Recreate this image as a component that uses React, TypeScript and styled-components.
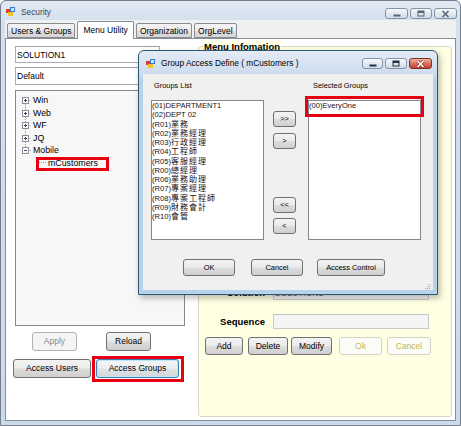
import React from 'react';
import styled, { createGlobalStyle, css } from 'styled-components';

const GlobalStyle = createGlobalStyle`
  html, body {
    margin: 0;
    padding: 0;
    background: #ffffff;
  }
  body {
    font-family: "Liberation Sans", Arial, "Noto Sans CJK TC", sans-serif;
    color: #000;
  }
  * {
    box-sizing: border-box;
  }
`;

const UI_FONT = '"Liberation Sans", Arial, "Noto Sans CJK TC", sans-serif';

// ---------- window chrome ----------

const Window = styled.div`
  position: relative;
  width: 461px;
  height: 426px;
  display: flex;
  flex-direction: column;
  border: 1px solid #737f8c;
  border-radius: 6px 6px 0 0;
  background: linear-gradient(#e2eaf4, #d4e0ee 20px, #cbdaec);
  overflow: hidden;
`;

const TitleBar = styled.div<{ $h: number; $padL: number; $padR: number }>`
  height: ${(p) => p.$h}px;
  flex: none;
  display: flex;
  align-items: center;
  padding: 0 ${(p) => p.$padR}px 0 ${(p) => p.$padL}px;
`;

const Caption = styled.span<{ $active?: boolean; $ml: number; $mt?: number }>`
  margin: ${(p) => p.$mt ?? 0}px 0 0 ${(p) => p.$ml}px;
  font-family: ${UI_FONT};
  font-size: 8.3px;
  color: ${(p) => (p.$active ? '#000' : '#3c4650')};
  flex: 1;
  white-space: nowrap;
`;

const CaptionButtons = styled.div<{ $mt: number }>`
  align-self: flex-start;
  margin-top: ${(p) => p.$mt}px;
  display: flex;
  gap: 2px;
`;

const CaptionButton = styled.span<{ $w: number; $close?: boolean }>`
  width: ${(p) => p.$w}px;
  height: 11px;
  display: flex;
  align-items: center;
  justify-content: center;
  border: 1px solid ${(p) => (p.$close ? '#7a2f24' : '#8393a6')};
  border-radius: 3px;
  background: ${(p) =>
    p.$close
      ? 'linear-gradient(#efb6a8, #d9705d 50%, #c5432f)'
      : 'linear-gradient(#f7f9fc, #e3e9f0 50%, #d1dbe6)'};
`;

const AppIcon = () => (
  <svg width="9" height="10" viewBox="0 0 9 10">
    <rect x="0" y="3" width="4" height="4" fill="#e23b2b" />
    <rect x="4" y="1" width="5" height="5" fill="#3b78d4" />
    <rect x="5" y="2" width="3" height="3" fill="#cfe2fb" />
    <rect x="2" y="6" width="5" height="4" fill="#f2c12e" />
  </svg>
);

const MinGlyph = ({ c }: { c: string }) => (
  <svg width="8" height="6" viewBox="0 0 8 6">
    <rect x="0.5" y="3.5" width="7" height="2" fill={c} />
  </svg>
);

const RestoreGlyph = ({ c }: { c: string }) => (
  <svg width="8" height="7" viewBox="0 0 8 7">
    <rect x="1" y="1" width="6" height="5" fill="none" stroke={c} strokeWidth="1" />
    <rect x="1" y="1" width="6" height="2" fill={c} />
  </svg>
);

const CloseGlyph = ({ c, edge }: { c: string; edge?: string }) => (
  <svg width="9" height="8" viewBox="0 0 9 8">
    {edge && <path d="M1.5 1 L7.5 7 M7.5 1 L1.5 7" stroke={edge} strokeWidth="3" />}
    <path d="M1.5 1 L7.5 7 M7.5 1 L1.5 7" stroke={c} strokeWidth="1.6" />
  </svg>
);

// ---------- tabs ----------

const Client = styled.div`
  flex: 1;
  display: flex;
  flex-direction: column;
  padding: 0 4px 4px 4px;
`;

const TabStrip = styled.div`
  height: 18px;
  flex: none;
  display: flex;
  align-items: flex-end;
  gap: 2px;
  padding-left: 2px;
  background: #f0f0f0;
  position: relative;
  z-index: 1;
`;

const Tab = styled.div<{ $active?: boolean }>`
  height: ${(p) => (p.$active ? 18 : 15)}px;
  margin-bottom: ${(p) => (p.$active ? -1 : 0)}px;
  padding: 0 ${(p) => (p.$active ? 5 : 3)}px ${(p) => (p.$active ? 2 : 0)}px;
  display: flex;
  align-items: center;
  border: 1px solid #898c95;
  border-bottom: ${(p) => (p.$active ? 'none' : '1px solid #898c95')};
  border-radius: 2px 2px 0 0;
  background: ${(p) =>
    p.$active ? '#ffffff' : 'linear-gradient(#f3f3f3, #ececec 50%, #e0e0e0 51%, #d5d5d5)'};
  font-size: 8.5px;
  white-space: nowrap;
`;

const TabPage = styled.div`
  flex: 1;
  display: grid;
  grid-template-columns: 192px 255px;
  border: 1px solid #898c95;
  background: #ffffff;
`;

// ---------- left pane ----------

const LeftPane = styled.div`
  display: flex;
  flex-direction: column;
  padding: 7px 0 0 7px;
`;

const TextBox = styled.div<{ $w: number; $h: number; $mt?: number; $ml?: number; $disabled?: boolean }>`
  width: ${(p) => p.$w}px;
  height: ${(p) => p.$h}px;
  margin: ${(p) => p.$mt ?? 0}px 0 0 ${(p) => p.$ml ?? 0}px;
  padding-left: 1px;
  display: flex;
  align-items: center;
  border: 1px solid ${(p) => (p.$disabled ? '#c9c9c9' : '#abadb3')};
  border-top-color: ${(p) => (p.$disabled ? '#c2c2c2' : '#9ea1a8')};
  background: ${(p) => (p.$disabled ? '#f4f4f4' : '#ffffff')};
  color: ${(p) => (p.$disabled ? '#6d6d6d' : '#000')};
  font-size: 8.5px;
  white-space: nowrap;
  overflow: hidden;
`;

const Tree = styled.div`
  width: 170px;
  height: 236px;
  margin: 5px 0 0 2px;
  padding-top: 3px;
  border: 1px solid #828790;
  background: #f7f7f7;
`;

const TreeRow = styled.div<{ $indent: number }>`
  height: 12.5px;
  display: flex;
  align-items: center;
  padding-left: ${(p) => p.$indent}px;
  font-size: 8.8px;
  white-space: nowrap;
`;

const TreeText = styled.span`
  margin-left: 2px;
`;

type LinePart = 'first' | 'middle' | 'last';

const Expander = ({ open, part }: { open: boolean; part: LinePart }) => (
  <svg width="12" height="12.5" viewBox="0 0 12 12.5">
    <line
      x1="6.5"
      x2="6.5"
      y1={part === 'first' ? 6 : 0}
      y2={part === 'last' ? 6 : 12.5}
      stroke="#a0a0a0"
      strokeDasharray="1 1"
    />
    <line x1="9.5" x2="12" y1="6.5" y2="6.5" stroke="#a0a0a0" strokeDasharray="1 1" />
    <rect x="3.5" y="3.5" width="6" height="6" fill="#fdfdfd" stroke="#8f8f8f" />
    <line x1="5" x2="8" y1="6.5" y2="6.5" stroke="#2a4a86" />
    {!open && <line x1="6.5" x2="6.5" y1="5" y2="8" stroke="#2a4a86" />}
  </svg>
);

const ChildStub = () => (
  <svg width="7" height="3" viewBox="0 0 7 3">
    <line x1="0" x2="7" y1="1.5" y2="1.5" stroke="#9a9a9a" strokeDasharray="1 1" />
  </svg>
);

const Marked = styled.span<{ $inset: string }>`
  position: relative;
  display: inline-flex;
  align-items: center;

  &::after {
    content: '';
    position: absolute;
    inset: ${(p) => p.$inset};
    border: 3px solid #e60012;
    pointer-events: none;
  }
`;

const ButtonRow = styled.div<{ $mt: number; $pl?: number }>`
  display: flex;
  align-items: center;
  margin-top: ${(p) => p.$mt}px;
  padding-left: ${(p) => p.$pl ?? 0}px;
`;

type Variant = 'normal' | 'disabled' | 'muted' | 'focus';

const variants: Record<Variant, ReturnType<typeof css>> = {
  normal: css`
    border: 1px solid #707070;
    background: linear-gradient(#f3f3f3, #ebebeb 48%, #dddddd 52%, #cfcfcf);
    color: #000;
  `,
  focus: css`
    border: 1px solid #3c7fb1;
    box-shadow: inset 0 0 0 1px #bfe6f8;
    background: linear-gradient(#f4f6f7, #eceef0 48%, #e0e3e6 52%, #d3d7da);
    color: #000;
  `,
  disabled: css`
    border: 1px solid #adb2b5;
    background: #f4f4f4;
    color: #8b8b8b;
  `,
  muted: css`
    border: 1px solid #d3d3c4;
    background: #fdfdf7;
    color: #c2b84f;
  `,
};

const Button = styled.button<{ $w: number; $h: number; $size?: number; $ml?: number; $variant?: Variant }>`
  width: ${(p) => p.$w}px;
  height: ${(p) => p.$h}px;
  margin: 0 0 0 ${(p) => p.$ml ?? 0}px;
  padding: 0;
  flex: none;
  font-family: ${UI_FONT};
  font-size: ${(p) => p.$size ?? 8.5}px;
  line-height: 1;
  border-radius: 3px;
  white-space: nowrap;
  ${(p) => variants[p.$variant ?? 'normal']}
`;

// ---------- right group box ----------

const InfoGroup = styled.fieldset`
  min-width: 0;
  margin: 2px 1px 3px 0;
  padding: 0;
  border: 1px solid #d6d6c8;
  border-radius: 3px;
  background: #ffffe3;
`;

const InfoLegend = styled.legend`
  margin-left: 4px;
  padding: 0 1px;
  height: 11px;
  line-height: 11px;
  font-size: 9.5px;
  font-weight: bold;
  background: #ffffe3;
`;

const FieldGrid = styled.div`
  display: grid;
  grid-template-columns: 66px 156px;
  column-gap: 8px;
  row-gap: 14px;
  align-items: center;
  margin-top: 233px;
`;

const FieldLabel = styled.span`
  text-align: right;
  font-size: 9.5px;
  font-weight: bold;
  white-space: nowrap;
`;

// ---------- dialog ----------

const Dialog = styled.div`
  position: absolute;
  left: 137px;
  top: 49px;
  width: 300px;
  height: 245px;
  z-index: 5;
  display: flex;
  flex-direction: column;
  padding: 0 4px 4px 4px;
  border: 1px solid #2c5873;
  border-radius: 6px 6px 0 0;
  background: linear-gradient(#e3ebf5, #cddcee 23px, #b9d1ea 30px);
  box-shadow: 2px 3px 6px rgba(0, 0, 0, 0.28);
`;

const DialogBody = styled.div`
  flex: 1;
  display: flex;
  flex-direction: column;
  padding: 7px 0 0 8px;
  background: #f0f0f0;
`;

const Panels = styled.div`
  display: flex;
`;

const ListColumn = styled.div<{ $ml?: number; $capIndent: number }>`
  display: flex;
  flex-direction: column;
  margin-left: ${(p) => p.$ml ?? 0}px;

  & > span {
    height: 10px;
    line-height: 10px;
    margin: 0 0 9px ${(p) => p.$capIndent}px;
    font-size: 7.4px;
  }
`;

const ListBox = styled.div`
  width: 113px;
  height: 140px;
  border: 1px solid #828790;
  background: #ffffff;
`;

const ListItem = styled.div`
  display: flex;
  align-items: center;
  height: 9.25px;
  line-height: 9.25px;
  font-size: 7.6px;
  color: #1a1020;
  white-space: nowrap;
`;

const CjkName = styled.span`
  font-size: 8px;
  letter-spacing: 1px;
  line-height: 9.25px;
`;

const MoveColumn = styled.div`
  width: 23px;
  height: 140px;
  margin: 19px 0 0 9px;
  padding: 11px 0 6px;
  display: flex;
  flex-direction: column;
  justify-content: space-between;
`;

const MoveGroup = styled.div<{ $gap: number }>`
  display: flex;
  flex-direction: column;
  gap: ${(p) => p.$gap}px;
`;

const Grip = styled.div`
  align-self: flex-end;
  margin: 8px 2px 0 0;
  display: flex;
`;

const GripDots = () => (
  <svg width="6" height="6" viewBox="0 0 6 6">
    {[
      [4, 0],
      [2, 2],
      [4, 2],
      [0, 4],
      [2, 4],
      [4, 4],
    ].map(([x, y]) => (
      <rect key={`${x}-${y}`} x={x} y={y} width="1.2" height="1.2" fill="#a8b2bf" />
    ))}
  </svg>
);

const groups: [string, string][] = [
  ['(01)DEPARTMENT1', ''],
  ['(02)DEPT 02', ''],
  ['(R01)', '業務'],
  ['(R02)', '業務經理'],
  ['(R03)', '行政經理'],
  ['(R04)', '工程師'],
  ['(R05)', '客服經理'],
  ['(R00)', '總經理'],
  ['(R06)', '業務助理'],
  ['(R07)', '專案經理'],
  ['(R08)', '專案工程師'],
  ['(R09)', '財務會計'],
  ['(R10)', '會管'],
];

const roots: { name: string; open: boolean; part: LinePart }[] = [
  { name: 'Win', open: false, part: 'first' },
  { name: 'Web', open: false, part: 'middle' },
  { name: 'WF', open: false, part: 'middle' },
  { name: 'JQ', open: false, part: 'middle' },
  { name: 'Mobile', open: true, part: 'last' },
];

export default function App() {
  return (
    <>
      <GlobalStyle />
      <Window>
        <TitleBar $h={19} $padL={5} $padR={3}>
          <AppIcon />
          <Caption $ml={6} $mt={3}>
            Security
          </Caption>
          <CaptionButtons $mt={7}>
            <CaptionButton $w={23}>
              <MinGlyph c="#56667a" />
            </CaptionButton>
            <CaptionButton $w={22}>
              <RestoreGlyph c="#56667a" />
            </CaptionButton>
            <CaptionButton $w={23}>
              <CloseGlyph c="#56667a" />
            </CaptionButton>
          </CaptionButtons>
        </TitleBar>

        <Client>
          <TabStrip>
            <Tab>Users &amp; Groups</Tab>
            <Tab $active>Menu Utility</Tab>
            <Tab>Organization</Tab>
            <Tab>OrgLevel</Tab>
          </TabStrip>

          <TabPage>
            <LeftPane>
              <TextBox $w={145} $h={17} $ml={2}>
                SOLUTION1
              </TextBox>
              <TextBox $w={170} $h={18} $ml={2} $mt={4}>
                Default
              </TextBox>
              <Tree>
                {roots.map((r) => (
                  <TreeRow key={r.name} $indent={3}>
                    <Expander open={r.open} part={r.part} />
                    <TreeText>{r.name}</TreeText>
                  </TreeRow>
                ))}
                <TreeRow $indent={23}>
                  <Marked $inset="-1px -11px -3px -3px">
                    <ChildStub />
                    <TreeText>mCustomers</TreeText>
                  </Marked>
                </TreeRow>
              </Tree>

              <ButtonRow $mt={6}>
                <Button $w={45} $h={19} $ml={19} $variant="disabled">
                  Apply
                </Button>
                <Button $w={45} $h={19} $ml={29}>
                  Reload
                </Button>
              </ButtonRow>
              <ButtonRow $mt={8}>
                <Button $w={78} $h={19}>
                  Access Users
                </Button>
                <Marked $inset="-3px -5px -4px -4px" style={{ marginLeft: 5 }}>
                  <Button $w={83} $h={19} $variant="focus">
                    Access Groups
                  </Button>
                </Marked>
              </ButtonRow>
            </LeftPane>

            <InfoGroup>
              <InfoLegend>Menu Infomation</InfoLegend>
              <FieldGrid>
                <FieldLabel>Solution</FieldLabel>
                <TextBox $w={156} $h={15} $disabled>
                  SOLUTION1
                </TextBox>
                <FieldLabel>Sequence</FieldLabel>
                <TextBox $w={156} $h={15} $disabled />
              </FieldGrid>
              <ButtonRow $mt={8} $pl={6}>
                <Button $w={38} $h={18}>
                  Add
                </Button>
                <Button $w={40} $h={18} $ml={5}>
                  Delete
                </Button>
                <Button $w={41} $h={18} $ml={3}>
                  Modify
                </Button>
                <Button $w={43} $h={18} $ml={7} $variant="muted">
                  Ok
                </Button>
                <Button $w={44} $h={18} $ml={5} $variant="muted">
                  Cancel
                </Button>
              </ButtonRow>
            </InfoGroup>
          </TabPage>
        </Client>

        <Dialog>
          <TitleBar $h={23} $padL={3} $padR={1}>
            <AppIcon />
            <Caption $active $ml={6}>
              Group Access Define ( mCustomers )
            </Caption>
            <CaptionButtons $mt={7}>
              <CaptionButton $w={21}>
                <MinGlyph c="#1f2f44" />
              </CaptionButton>
              <CaptionButton $w={22}>
                <RestoreGlyph c="#1f2f44" />
              </CaptionButton>
              <CaptionButton $w={23} $close>
                <CloseGlyph c="#ffffff" edge="#8a3226" />
              </CaptionButton>
            </CaptionButtons>
          </TitleBar>

          <DialogBody>
            <Panels>
              <ListColumn $capIndent={3}>
                <span>Groups List</span>
                <ListBox>
                  {groups.map(([code, name]) => (
                    <ListItem key={code}>
                      {code}
                      {name && <CjkName>{name}</CjkName>}
                    </ListItem>
                  ))}
                </ListBox>
              </ListColumn>

              <MoveColumn>
                <MoveGroup $gap={6}>
                  <Button $w={23} $h={16} $size={7.4}>
                    &gt;&gt;
                  </Button>
                  <Button $w={23} $h={16} $size={7.4}>
                    &gt;
                  </Button>
                </MoveGroup>
                <MoveGroup $gap={5}>
                  <Button $w={23} $h={16} $size={7.4}>
                    &lt;&lt;
                  </Button>
                  <Button $w={23} $h={16} $size={7.4}>
                    &lt;
                  </Button>
                </MoveGroup>
              </MoveColumn>

              <ListColumn $ml={12} $capIndent={5}>
                <span>Selected Groups</span>
                <ListBox>
                  <ListItem>
                    <Marked $inset="-5px -4px -7px -4px" style={{ flex: 1 }}>
                      (00)EveryOne
                    </Marked>
                  </ListItem>
                </ListBox>
              </ListColumn>
            </Panels>

            <ButtonRow $mt={19} $pl={32}>
              <Button $w={52} $h={17} $size={7.4}>
                OK
              </Button>
              <Button $w={52} $h={17} $size={7.4} $ml={16}>
                Cancel
              </Button>
              <Button $w={68} $h={17} $size={7.4} $ml={14}>
                Access Control
              </Button>
            </ButtonRow>

            <Grip>
              <GripDots />
            </Grip>
          </DialogBody>
        </Dialog>
      </Window>
    </>
  );
}
